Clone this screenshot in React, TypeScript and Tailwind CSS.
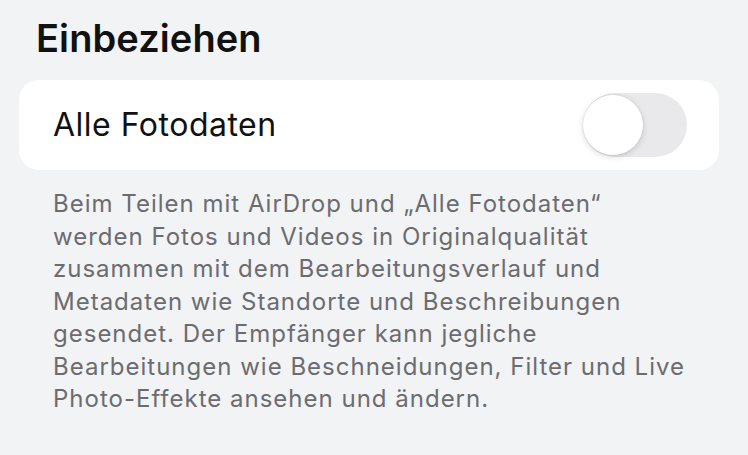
export default function App() {
  return (
    <div
      className="w-[748px] h-[455px] overflow-hidden bg-[#f1f3f5] pt-[16px]"
      style={{ fontFamily: "Inter, 'Noto Sans', sans-serif" }}
    >
      <h1 className="pl-[36px] text-[38px] leading-[44px] font-semibold text-[#111] tracking-[0.1px]">
        Einbeziehen
      </h1>
      <div className="mx-[19px] mt-[20px] h-[90px] w-[700px] rounded-[20px] bg-white flex items-center justify-between pl-[34px] pr-[32px]">
        <span className="text-[32px] text-[#111] tracking-[0.5px]">Alle Fotodaten</span>
        <div className="relative w-[104px] h-[64px] rounded-full bg-[#e9e9eb]">
          <div className="absolute left-[0px] top-[2px] w-[60px] h-[60px] rounded-full bg-white shadow-[0_2px_6px_rgba(0,0,0,0.15),0_0_0_1px_rgba(0,0,0,0.04)]" />
        </div>
      </div>
      <p className="pl-[53px] pr-[4px] mt-[18px] text-[24px] leading-[32.5px] text-[#6c6c70] tracking-[1px]">
        Beim Teilen mit AirDrop und „Alle Fotodaten“
        <br />
        werden Fotos und Videos in Originalqualität
        <br />
        zusammen mit dem Bearbeitungsverlauf und
        <br />
        Metadaten wie Standorte und Beschreibungen
        <br />
        gesendet. Der Empfänger kann jegliche
        <br />
        Bearbeitungen wie Beschneidungen, Filter und Live
        <br />
        Photo-Effekte ansehen und ändern.
      </p>
    </div>
  );
}
